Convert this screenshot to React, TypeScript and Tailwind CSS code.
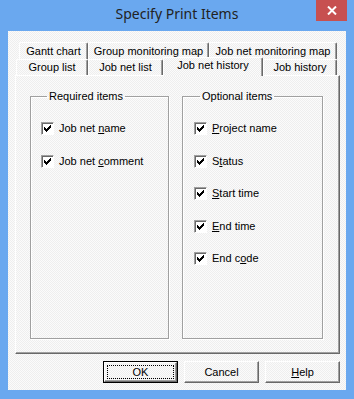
import React from 'react';

const dither = 'bg-[repeating-conic-gradient(#eeeeee_0_25%,#fbfbfb_0_50%)] bg-[length:2px_2px]';

function Check() {
  // classic 7x7 check mark
  const px = [
    [6, 0],
    [5, 1], [6, 1],
    [0, 2], [4, 2], [5, 2], [6, 2],
    [0, 3], [1, 3], [3, 3], [4, 3], [5, 3],
    [0, 4], [1, 4], [2, 4], [3, 4], [4, 4],
    [1, 5], [2, 5], [3, 5],
    [2, 6],
  ];
  return (
    <svg width="7" height="7" viewBox="0 0 7 7" shapeRendering="crispEdges">
      {px.map(([x, y]) => (
        <rect key={`${x}-${y}`} x={x} y={y} width="1" height="1" fill="#000" />
      ))}
    </svg>
  );
}

function CheckItem({ children }: { children: React.ReactNode }) {
  return (
    <div className="flex items-center h-[13px] gap-[5px]">
      <div className="w-[13px] h-[13px] shrink-0 border-t border-l border-[#a0a0a0] border-r-white border-b-white border bg-white shadow-[inset_1px_1px_0_#696969] flex items-center justify-center">
        <Check />
      </div>
      <span className="leading-[13px] whitespace-nowrap">{children}</span>
    </div>
  );
}

function Tab({ label, w }: { label: string; w: string }) {
  return (
    <div
      className={`${w} h-full flex items-center justify-center rounded-t-[2px] border-t border-l border-white border-r border-r-[#696969] shadow-[inset_-1px_0_0_#a0a0a0] whitespace-nowrap`}
    >
      {label}
    </div>
  );
}

function GroupBox({ title, children, w, pl }: { title: string; children: React.ReactNode; w: string; pl: string }) {
  return (
    <fieldset className={`${w} h-[249px] border border-[#a0a0a0] shadow-[1px_1px_0_#fff,inset_1px_1px_0_#fff] ${pl} pt-[19px]`}>
      <legend className="ml-[6px] px-[2px] leading-[13px]">{title}</legend>
      <div className="flex flex-col gap-[19.5px]">{children}</div>
    </fieldset>
  );
}

function Button({ children, primary }: { children: React.ReactNode; primary?: boolean }) {
  if (primary) {
    return (
      <div className="w-[75px] h-[22px] border border-black">
        <div className="w-full h-full border-t border-l border-white border-r border-b border-r-[#696969] border-b-[#696969] shadow-[inset_-1px_-1px_0_#a0a0a0] p-[2px]">
          <div className="w-full h-full border border-dotted border-black flex items-center justify-center leading-[13px]">
            {children}
          </div>
        </div>
      </div>
    );
  }
  return (
    <div className="w-[75px] h-[22px] border-t border-l border-white border-r border-b border-r-[#696969] border-b-[#696969] shadow-[inset_-1px_-1px_0_#a0a0a0] flex items-center justify-center leading-[13px]">
      {children}
    </div>
  );
}

export default function App() {
  return (
    <div className="w-[354px] h-[399px] bg-[#6aa8ef] flex flex-col font-['Liberation_Sans',Arial,sans-serif] text-[11px] text-black">
      {/* Title bar */}
      <div className="h-[31px] shrink-0 grid grid-cols-[1fr_auto_1fr]">
        <div />
        <div className="pt-[4px] font-['Noto_Sans',sans-serif] text-[14px] leading-[20px] text-[#222]">Specify Print Items</div>
        <div className="flex justify-end items-start pr-[7px]">
          <div className="w-[31px] h-[21px] bg-[#c75050] flex items-center justify-center">
            <svg width="10" height="9" viewBox="0 0 10 9">
              <path d="M1 0.5 L9 8.5 M9 0.5 L1 8.5" stroke="#fff" strokeWidth="2" />
            </svg>
          </div>
        </div>
      </div>

      {/* Client area */}
      <div className={`mx-[8px] mb-[9px] flex-1 flex flex-col pt-[11px] pl-[7px] pr-[6px] pb-[7px] ${dither}`}>
        {/* back tab row */}
        <div className="h-[17px] flex pl-[4px] pr-[3px]">
          <Tab label="Gantt chart" w="w-[69px]" />
          <Tab label="Group monitoring map" w="w-[121px]" />
          <Tab label="Job net monitoring map" w="w-[128px]" />
        </div>
        {/* front tab row */}
        <div className="h-[16px] flex items-end pl-[1px] relative z-10">
          <Tab label="Group list" w="w-[72px]" />
          <Tab label="Job net list" w="w-[75px]" />
          <div className={`w-[100px] h-[19px] -mb-px flex items-center justify-center pb-[3px] rounded-t-[2px] border-t border-l border-white border-r border-r-[#696969] shadow-[inset_-1px_0_0_#a0a0a0] ${dither}`}>
            Job net history
          </div>
          <Tab label="Job history" w="w-[74px]" />
        </div>

        {/* Tab panel */}
        <div className="h-[279px] shrink-0 border-t border-l border-white border-r border-b border-r-[#696969] border-b-[#696969] shadow-[inset_-1px_-1px_0_#a0a0a0] flex gap-[13px] pl-[14px] pt-[14px]">
          <GroupBox title="Required items" w="w-[139px]" pl="pl-[10px]">
            <CheckItem>
              Job net <u>n</u>ame
            </CheckItem>
            <CheckItem>
              Job net <u>c</u>omment
            </CheckItem>
          </GroupBox>
          <GroupBox title="Optional items" w="w-[141px]" pl="pl-[11px]">
            <CheckItem>
              <u>P</u>roject name
            </CheckItem>
            <CheckItem>
              S<u>t</u>atus
            </CheckItem>
            <CheckItem>
              <u>S</u>tart time
            </CheckItem>
            <CheckItem>
              <u>E</u>nd time
            </CheckItem>
            <CheckItem>
              End c<u>o</u>de
            </CheckItem>
          </GroupBox>
        </div>

        {/* Buttons */}
        <div className="mt-[7px] flex justify-end gap-[6px]">
          <Button primary>OK</Button>
          <Button>Cancel</Button>
          <Button>
            <u>H</u>elp
          </Button>
        </div>
      </div>
    </div>
  );
}
